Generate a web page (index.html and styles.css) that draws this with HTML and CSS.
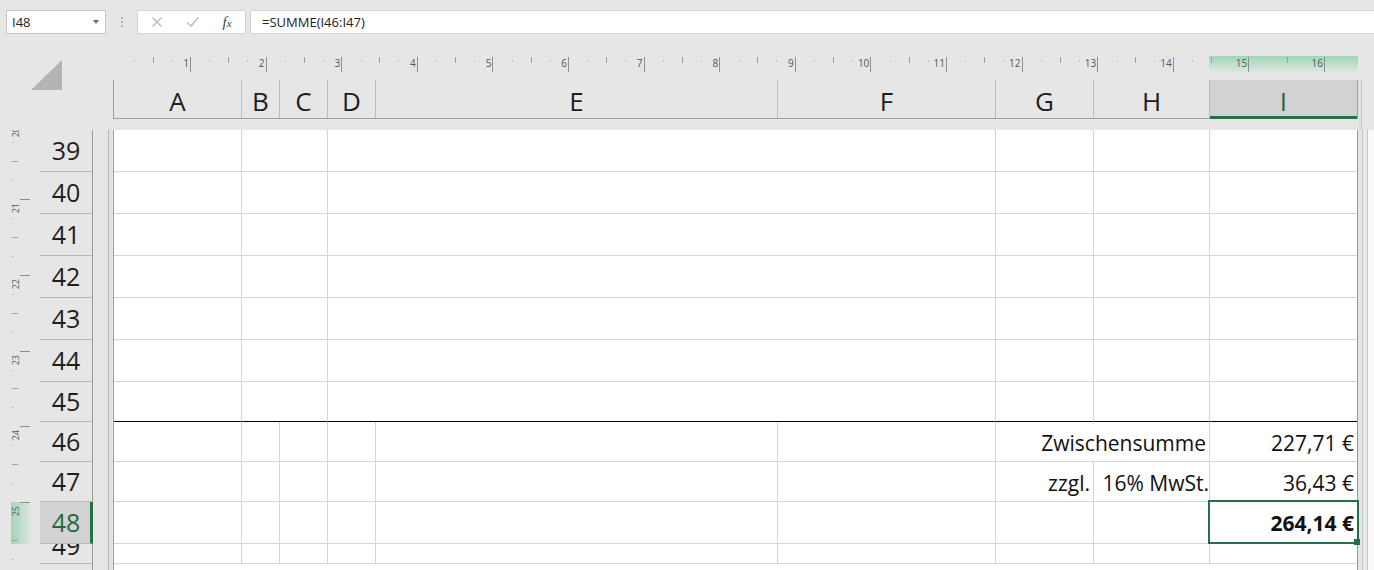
FILE: index.html
```html
<!DOCTYPE html>
<html lang="de">
<head>
<meta charset="utf-8">
<title>Rechnung – Excel</title>
<link rel="stylesheet" href="styles.css">
</head>
<body>
<div class="app">
  <div class="fbar">
    <div class="namebox"><span>I48</span><span class="dd"></span></div>
    <div class="grip"><i></i><i></i><i></i></div>
    <div class="fbtns">
      <svg class="ic" width="12" height="12" viewBox="0 0 12 12"><path d="M1.5 1.5 L10.5 10.5 M10.5 1.5 L1.5 10.5" stroke="#b9b9b9" stroke-width="1.3" fill="none"/></svg>
      <svg class="ic" width="14" height="12" viewBox="0 0 14 12"><path d="M1.5 6.5 L5 10 L12.5 1.5" stroke="#b9b9b9" stroke-width="1.4" fill="none"/></svg>
      <span class="fx">f<span class="fxx">x</span></span>
    </div>
    <div class="finput">=SUMME(I46:I47)</div>
  </div>

  <div class="work">
    <div class="corner"><svg width="31" height="30" viewBox="0 0 31 30"><polygon points="31,0 31,30 0,30" fill="#b4b4b4"/></svg></div>

    <div class="hruler">
      <div class="hseg">1</div><div class="hseg">2</div><div class="hseg">3</div><div class="hseg">4</div>
      <div class="hseg">5</div><div class="hseg">6</div><div class="hseg">7</div><div class="hseg">8</div>
      <div class="hseg">9</div><div class="hseg">10</div><div class="hseg">11</div><div class="hseg">12</div>
      <div class="hseg">13</div><div class="hseg">14</div><div class="hseg">15</div><div class="hseg">16</div>
      <div class="hseg"></div>
    </div>

    <div class="colheads cols9">
      <div class="ch">A</div><div class="ch">B</div><div class="ch">C</div><div class="ch">D</div>
      <div class="ch">E</div><div class="ch">F</div><div class="ch">G</div><div class="ch">H</div>
      <div class="ch sel">I</div>
    </div>

    <div class="rstrip-top"></div>
    <div class="rstrip"></div>

    <div class="vruler">
      <div class="vseg first"><span>20</span></div>
      <div class="vseg"><span>21</span></div>
      <div class="vseg"><span>22</span></div>
      <div class="vseg"><span>23</span></div>
      <div class="vseg"><span>24</span></div>
      <div class="vseg"><span>25</span></div>
      <div class="vseg"></div>
    </div>

    <div class="rowheads">
      <div class="rh h42"><span>39</span></div>
      <div class="rh h42"><span>40</span></div>
      <div class="rh h42"><span>41</span></div>
      <div class="rh h42"><span>42</span></div>
      <div class="rh h42"><span>43</span></div>
      <div class="rh h42"><span>44</span></div>
      <div class="rh h40"><span>45</span></div>
      <div class="rh h40"><span>46</span></div>
      <div class="rh h40"><span>47</span></div>
      <div class="rh h42 sel"><span>48</span></div>
      <div class="rh h20 clip"><span>49</span></div>
    </div>

    <div class="gapcol"></div>

    <div class="sheet">
      <div class="row cols6 h42"><div class="c"></div><div class="c"></div><div class="c"></div><div class="c"></div><div class="c"></div><div class="c"></div></div>
      <div class="row cols6 h42"><div class="c"></div><div class="c"></div><div class="c"></div><div class="c"></div><div class="c"></div><div class="c"></div></div>
      <div class="row cols6 h42"><div class="c"></div><div class="c"></div><div class="c"></div><div class="c"></div><div class="c"></div><div class="c"></div></div>
      <div class="row cols6 h42"><div class="c"></div><div class="c"></div><div class="c"></div><div class="c"></div><div class="c"></div><div class="c"></div></div>
      <div class="row cols6 h42"><div class="c"></div><div class="c"></div><div class="c"></div><div class="c"></div><div class="c"></div><div class="c"></div></div>
      <div class="row cols6 h42"><div class="c"></div><div class="c"></div><div class="c"></div><div class="c"></div><div class="c"></div><div class="c"></div></div>
      <div class="row cols6 h40 total-line"><div class="c"></div><div class="c"></div><div class="c"></div><div class="c"></div><div class="c"></div><div class="c"></div></div>

      <div class="row cols9 h40">
        <div class="c"></div><div class="c"></div><div class="c"></div><div class="c"></div><div class="c"></div><div class="c"></div>
        <div class="c noline"></div>
        <div class="c v">Zwischensumme</div>
        <div class="c v">227,71 €</div>
      </div>
      <div class="row cols9 h40">
        <div class="c"></div><div class="c"></div><div class="c"></div><div class="c"></div><div class="c"></div><div class="c"></div>
        <div class="c v">zzgl.</div>
        <div class="c v tight">16% MwSt.</div>
        <div class="c v">36,43 €</div>
      </div>
      <div class="row cols9 h42">
        <div class="c"></div><div class="c"></div><div class="c"></div><div class="c"></div><div class="c"></div><div class="c"></div>
        <div class="c"></div>
        <div class="c"></div>
        <div class="c v bold active">264,14 €</div>
      </div>
      <div class="row cols9 h20">
        <div class="c"></div><div class="c"></div><div class="c"></div><div class="c"></div><div class="c"></div><div class="c"></div>
        <div class="c"></div><div class="c"></div><div class="c"></div>
      </div>
    </div>
  </div>
</div>
</body>
</html>
```

FILE: styles.css
```css
* { box-sizing: border-box; }
html, body { margin: 0; padding: 0; }
body {
  width: 1374px;
  height: 570px;
  overflow: hidden;
  background: #e6e6e6;
  font-family: "Open Sans", "Noto Sans", sans-serif;
  color: #000;
}
.app { display: flex; flex-direction: column; height: 570px; }

/* formula bar */
.fbar {
  height: 44px;
  flex: none;
  display: flex;
  align-items: flex-start;
  padding: 10px 0 0 6px;
}
.namebox {
  width: 100px;
  height: 24px;
  background: #fff;
  border: 1px solid #c6c6c6;
  display: flex;
  align-items: center;
  justify-content: space-between;
  padding: 0 6px 0 5px;
  font-size: 13px;
  color: #222;
}
.dd {
  width: 0; height: 0;
  border-left: 3.5px solid transparent;
  border-right: 3.5px solid transparent;
  border-top: 4px solid #6d6d6d;
}
.grip {
  width: 31px;
  height: 24px;
  display: flex;
  flex-direction: column;
  align-items: center;
  justify-content: center;
  gap: 2px;
}
.grip i { display: block; width: 2px; height: 2px; background: #b3b3b3; }
.fbtns {
  width: 109px;
  height: 24px;
  background: #fff;
  border: 1px solid #d4d4d4;
  display: flex;
  align-items: center;
  justify-content: space-around;
  padding: 0 2px;
}
.ic { display: block; }
.fx {
  font-family: "Liberation Serif", "DejaVu Serif", serif;
  font-style: italic;
  font-size: 15px;
  color: #444;
  line-height: 1;
}
.fxx { font-size: 11px; }
.finput {
  flex: 1;
  margin-left: 4px;
  height: 24px;
  background: #fff;
  border: 1px solid #d4d4d4;
  border-right: none;
  padding-left: 11px;
  font-size: 13px;
  line-height: 22px;
  color: #222;
}

/* workspace grid */
.work {
  flex: 1;
  min-height: 0;
  display: grid;
  grid-template-columns: 40px 53px 20px 1245px 1fr;
  grid-template-rows: 36px 39px 11px 1fr;
}
.corner { grid-column: 1 / 4; grid-row: 1 / 3; padding: 16px 0 0 31px; }
.corner svg { display: block; }

/* horizontal ruler */
.hruler {
  grid-column: 4;
  grid-row: 1;
  display: flex;
  padding: 13px 0 0 2.4px;
  overflow: hidden;
  background: linear-gradient(#9fd6b6, #dce8e1) no-repeat 1096px 12px / 149px 16px;
}
.hseg {
  flex: none;
  width: 75.6px;
  height: 15px;
  border-right: 1px solid #8f8f8f;
  text-align: right;
  padding: 1px 1px 0 0;
  font-size: 10px;
  line-height: 10px;
  color: #555;
  background:
    linear-gradient(#9d9d9d, #9d9d9d) no-repeat 37.3px 0 / 1px 6px,
    linear-gradient(#c2c2c2, #c2c2c2) no-repeat 18.4px 3px / 1px 2px,
    linear-gradient(#c2c2c2, #c2c2c2) no-repeat 56.2px 3px / 1px 2px;
}

/* column headers */
.cols9 { display: grid; grid-template-columns: 128px 38px 48px 48px 402px 218px 98px 116px 147px; }
.cols6 { display: grid; grid-template-columns: 128px 86px 668px 98px 116px 147px; }
.colheads {
  grid-column: 4;
  grid-row: 2;
  border-left: 1px solid #a0a0a0;
  border-right: 1px solid #a0a0a0;
  border-bottom: 1px solid #a0a0a0;
}
.ch {
  border-right: 1px solid #bcbcbc;
  text-align: center;
  padding-top: 8px;
  font-size: 26px;
  line-height: 26px;
  color: #1e1e1e;
}
.ch:last-child { border-right: none; }
.ch.sel {
  background: #d2d2d2;
  color: #1d6b41;
  border-bottom: 3px solid #217346;
  margin-bottom: -1px;
}

/* right strip */
.rstrip-top { grid-column: 5; grid-row: 2 / 4; background: linear-gradient(to right, #e2e2e2 0 3px, #c4c4c4 3px 4px, #e6e6e6 4px); }
.rstrip {
  grid-column: 5;
  grid-row: 4;
  background: linear-gradient(to right, #e4e4e4 0 4px, #c6c6c6 4px 5px, #e9e9e9 5px 9px, #c6c6c6 9px 10px, #fafafa 10px);
}

/* vertical ruler */
.vruler {
  grid-column: 1;
  grid-row: 4;
  overflow: hidden;
  display: flex;
  flex-direction: column;
  background: linear-gradient(to right, #9fd6b6, #e2e8e4) no-repeat 11px 372px / 21px 42px;
}
.vseg {
  flex: none;
  height: 75.8px;
  background:
    linear-gradient(#8f8f8f, #8f8f8f) no-repeat 20px 0 / 10px 1px,
    linear-gradient(#a5a5a5, #a5a5a5) no-repeat 12px 37.9px / 6px 1px,
    linear-gradient(#c2c2c2, #c2c2c2) no-repeat 12px 19px / 2px 1px,
    linear-gradient(#c2c2c2, #c2c2c2) no-repeat 12px 56.8px / 2px 1px;
}
.vseg.first { margin-top: -6.8px; }
.vseg span {
  display: block;
  writing-mode: vertical-rl;
  transform: rotate(180deg);
  font-size: 9px;
  line-height: 7px;
  width: 7px;
  margin: 4px 0 0 12px;
  color: #5a5a5a;
}

/* row headers */
.rowheads {
  grid-column: 2;
  grid-row: 4;
  display: flex;
  flex-direction: column;
  border-right: 1px solid #9c9c9c;
}
.rh {
  flex: none;
  border-bottom: 1px solid #b8b8b8;
  display: flex;
  align-items: center;
  justify-content: center;
  font-size: 25px;
  line-height: 25px;
  color: #1e1e1e;
  overflow: hidden;
}
.rh.sel {
  background: #d3d3d3;
  color: #1d6b41;
  border-right: 3px solid #217346;
  margin-right: -1px;
  padding-left: 2px;
}
.rh.clip { align-items: flex-start; }
.rh.clip span { margin-top: -11px; }

.h42 { height: 42px; }
.h40 { height: 40px; }
.h20 { height: 20px; }

.gapcol {
  grid-column: 3;
  grid-row: 4;
  background: linear-gradient(to right, #e6e6e6 0 15px, #b9b9b9 15px 16px, #e2e2e2 16px 19px, #e6e6e6 19px);
}

/* sheet */
.sheet {
  grid-column: 4;
  grid-row: 4;
  background: #fff;
  border-left: 1px solid #a0a0a0;
  border-right: 1px solid #9a9a9a;
}
.row .c {
  border-right: 1px solid #d4d4d4;
  border-bottom: 1px solid #d4d4d4;
}
.row .c:last-child { border-right: none; }
.row.total-line .c { border-bottom-color: #000; }
.row .c.noline { border-right-color: transparent; }
.c.v {
  display: flex;
  justify-content: flex-end;
  align-items: flex-end;
  padding: 0 3px 7px 0;
  font-size: 21px;
  line-height: 21px;
  white-space: nowrap;
  color: #111;
}
.c.v.tight { padding-right: 0; }
.c.v.bold { font-weight: 700; padding-bottom: 9px; }
.c.active { position: relative; }
.c.active::after {
  content: "";
  position: absolute;
  left: -2px;
  top: -2px;
  right: -2px;
  bottom: -1px;
  border: 2px solid #217346;
}
.c.active::before {
  content: "";
  position: absolute;
  right: -3px;
  bottom: -2px;
  width: 6px;
  height: 6px;
  background: #217346;
  z-index: 1;
}
```
